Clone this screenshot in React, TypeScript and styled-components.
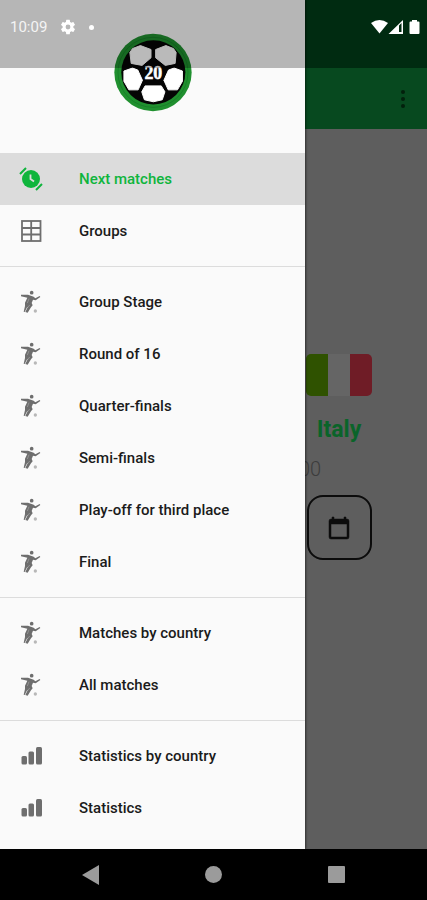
import React from "react";
import styled, { createGlobalStyle } from "styled-components";

const GlobalStyle = createGlobalStyle`
  *, *::before, *::after { box-sizing: border-box; }
  body { margin: 0; background: #000; font-family: Roboto, "Noto Sans", sans-serif; }
  button { font: inherit; border: 0; padding: 0; background: none; cursor: pointer; }
  svg { display: block; flex: none; }
`;

const Device = styled.div`
  min-height: 100vh;
  display: flex;
  flex-direction: column;
`;

const Stage = styled.div`
  flex: 1;
  display: grid;
  grid-template: 1fr / minmax(0, 1fr);
  & > * { grid-area: 1 / 1; }
`;

const Page = styled.main`
  display: flex;
  flex-direction: column;
  background: #5e5e5e;
`;

const PageTop = styled.div`
  height: 68px;
  background: #002b11;
`;

const AppBar = styled.header`
  height: 61px;
  padding-right: 12px;
  display: flex;
  align-items: center;
  justify-content: flex-end;
  background: #07491f;
`;

const IconButton = styled.button`
  display: grid;
  place-items: center;
  width: 24px;
  height: 32px;
  color: #02200c;
`;

const Team = styled.section`
  align-self: flex-end;
  width: 96px;
  margin: 225px 40px 0 0;
  display: flex;
  flex-direction: column;
  align-items: center;
`;

const Flag = styled.div`
  width: 66px;
  height: 42px;
  border-radius: 5px;
  overflow: hidden;
  display: grid;
  grid-template-columns: repeat(3, 1fr);
`;

const Stripe = styled.span<{ $color: string }>`
  background: ${(p) => p.$color};
`;

const TeamName = styled.h2`
  margin: 19px 0 0;
  font-size: 23px;
  line-height: 30px;
  font-weight: 700;
  color: #0a6429;
`;

const Kickoff = styled.span`
  align-self: flex-start;
  padding-left: 8px;
  margin-top: 12px;
  font-size: 20px;
  line-height: 24px;
  font-weight: 300;
  color: #3c3c3c;
`;

const CalendarButton = styled.button`
  width: 65px;
  height: 65px;
  margin-top: 14px;
  display: grid;
  place-items: center;
  border: 2px solid #0c0c0c;
  border-radius: 16px;
  color: #0c0c0c;
`;

const Drawer = styled.aside`
  width: min(calc(100% - 122px), 360px);
  background: #fafafa;
  box-shadow: 1px 0 2px rgba(0, 0, 0, 0.5);
`;

const DrawerHeader = styled.div`
  height: 153px;
  padding-top: 33px;
  display: flex;
  justify-content: center;
  align-items: flex-start;
`;

const Group = styled.ul`
  list-style: none;
  margin: 0;
  padding: 0;
  & + & {
    margin-top: 9px;
    padding-top: 9px;
    border-top: 1px solid #dcdcdc;
  }
`;

const Item = styled.button<{ $active?: boolean }>`
  width: 100%;
  height: 52px;
  padding-left: 19px;
  display: flex;
  align-items: center;
  gap: 36px;
  text-align: left;
  font-size: 15px;
  line-height: 21px;
  font-weight: 500;
  color: ${(p) => (p.$active ? "#0fb53c" : "#1b1b1b")};
  background: ${(p) => (p.$active ? "#dcdcdc" : "transparent")};
  svg { color: ${(p) => (p.$active ? "#0fb53c" : "#6e6e6e")}; }
`;

const StatusBar = styled.div`
  align-self: start;
  position: relative;
  height: 68px;
  padding: 0 7px 14px 10px;
  display: flex;
  align-items: center;
  justify-content: space-between;
  color: #fff;
`;

const StatusShade = styled.div`
  align-self: start;
  position: relative;
  width: min(calc(100% - 122px), 360px);
  height: 68px;
  background: rgba(0, 0, 0, 0.27);
`;

const StatusGroup = styled.div<{ $gap: number }>`
  display: flex;
  align-items: center;
  gap: ${(p) => p.$gap}px;
`;

const Clock = styled.span`
  font-size: 15px;
  line-height: 20px;
  color: #f4f4f4;
`;

const Dot = styled.span`
  width: 5px;
  height: 5px;
  border-radius: 50%;
  background: #fff;
`;

const NavBar = styled.nav`
  height: 51px;
  display: flex;
  justify-content: center;
  align-items: center;
  gap: 99px;
  color: #9b9b9b;
`;

const NavButton = styled.button`
  width: 24px;
  height: 24px;
  display: grid;
  place-items: center;
  color: inherit;
`;

const BallLogo = () => (
  <svg width="78" height="79" viewBox="341 98 236 237" role="img" aria-label="Football 20">
    <circle cx="459" cy="216.500" r="117" fill="#20902f" />
    <circle cx="459" cy="216" r="106" fill="none" stroke="#178028" strokeWidth="3" />
    <circle cx="460" cy="216" r="97" fill="#050505" />
    <g fill="#fff" stroke="#fff" strokeWidth="3" strokeLinejoin="round">
      <path d="M389 156 397 144 421 135 453 147V172L426 195 393 189Z" />
      <path d="M529 156 521 144 498 135 467 147V172L496 195 526 189Z" />
      <path d="M371 212 397 203 413 209 427 240 414 269 386 269 371 243Z" />
      <path d="M548 212 523 203 506 209 492 240 505 269 533 269 548 243Z" />
      <path d="M435 257H484L495 275 487 299 460 305 433 299 425 275Z" />
    </g>
    <text
      x="460"
      y="235"
      textAnchor="middle"
      fontFamily="Liberation Serif, serif"
      fontWeight="700"
      fontSize="54"
      fill="#fff"
      stroke="#fff"
      strokeWidth="1.500"
    >
      20
    </text>
  </svg>
);

const AlarmIcon = () => (
  <svg width="24" height="24" viewBox="0 0 24 24" fill="none" stroke="currentColor">
    <circle cx="12" cy="12" r="9" fill="currentColor" stroke="none" />
    <path d="M1 7 7 1M17 23 23 17" strokeWidth="2" />
    <path d="M11.500 7.500V12L15 14.500" stroke="#dcdcdc" strokeWidth="1.800" />
  </svg>
);

const TableIcon = () => (
  <svg width="24" height="24" viewBox="0 0 24 24" fill="none" stroke="currentColor">
    <rect x="3" y="2" width="18.500" height="20" strokeWidth="1.800" />
    <path d="M12.200 2V22M3 9H21.500M3 15.500H21.500" strokeWidth="1.800" />
  </svg>
);

const PlayerIcon = () => (
  <svg width="24" height="24" viewBox="59 28 72 72" fill="none" stroke="currentColor">
    <circle cx="97" cy="36" r="5.500" fill="currentColor" stroke="none" />
    <path
      d="M65 42 86 42 103 48 108 53 121 46 123 49 109 59 101 57 97 67 100 74 95 80 85 96 78 94 85 80 84 78 76 94 73 93 77 76 77 66 84 51 65 47Z"
      fill="currentColor"
      stroke="none"
    />
    <path d="M89 54 84 67M86 80 91 73" stroke="#a5a5a5" strokeWidth="2" />
    <circle cx="108" cy="91" r="5" fill="#b8b8b8" stroke="none" />
  </svg>
);

const BarsIcon = () => (
  <svg width="24" height="24" viewBox="0 0 24 24" fill="currentColor">
    <rect x="2.500" y="12" width="5.500" height="8.500" rx="1.500" />
    <rect x="9.500" y="7.500" width="5.500" height="13" rx="1.500" />
    <rect x="17" y="3" width="6" height="17.500" rx="1.500" />
  </svg>
);

const GearIcon = () => (
  <svg width="18" height="18" viewBox="0 0 24 24" fill="currentColor">
    <path d="M19.140 12.940c.04-.3.06-.61.06-.94s-.02-.64-.07-.94l2.030-1.580a.49.49 0 0 0 .12-.61l-1.920-3.320a.49.49 0 0 0-.59-.22l-2.390.96a7 7 0 0 0-1.620-.94l-.36-2.540A.48.48 0 0 0 13.920 2.400h-3.840a.48.48 0 0 0-.48.410l-.36 2.540c-.59.24-1.130.57-1.620.94l-2.390-.96a.49.49 0 0 0-.59.22L2.720 8.870a.49.49 0 0 0 .12.61l2.030 1.580c-.05.3-.07.62-.07.94s.02.64.07.94l-2.030 1.580a.49.49 0 0 0-.12.61l1.920 3.320c.12.22.37.29.59.22l2.390-.96c.5.38 1.030.7 1.620.94l.36 2.540c.05.24.25.41.48.41h3.840c.24 0 .44-.17.48-.41l.36-2.540a7 7 0 0 0 1.620-.94l2.390.96c.22.08.47 0 .59-.22l1.920-3.320a.49.49 0 0 0-.12-.61zM12 15.200a3.200 3.200 0 1 1 0-6.400 3.200 3.200 0 0 1 0 6.400z" />
  </svg>
);

const CalendarIcon = () => (
  <svg width="24" height="24" viewBox="0 0 24 24" fill="currentColor" stroke="currentColor" strokeWidth="0.500">
    <path d="M20 3h-1V1h-2v2H7V1H5v2H4a2 2 0 0 0-2 2v16a2 2 0 0 0 2 2h16a2 2 0 0 0 2-2V5a2 2 0 0 0-2-2zm0 18H4V8h16z" />
  </svg>
);

const SignalIcons = () => (
  <svg width="49" height="16" viewBox="0 0 49 16" fill="#fff">
    <path d="M0 4Q8.500-2 17 4L8.500 14.500Z" />
    <path fillRule="evenodd" d="M17.500 15 32 1V15ZM28 6.500V13H30.500V4Z" />
    <path d="M41 1H46V2.500H47.500A1 1 0 0 1 48.500 3.500V14A1 1 0 0 1 47.500 15H39.500A1 1 0 0 1 38.500 14V3.500A1 1 0 0 1 39.500 2.500H41Z" />
  </svg>
);

const groups = [
  [
    { label: "Next matches", Icon: AlarmIcon, active: true },
    { label: "Groups", Icon: TableIcon },
  ],
  [
    { label: "Group Stage", Icon: PlayerIcon },
    { label: "Round of 16", Icon: PlayerIcon },
    { label: "Quarter-finals", Icon: PlayerIcon },
    { label: "Semi-finals", Icon: PlayerIcon },
    { label: "Play-off for third place", Icon: PlayerIcon },
    { label: "Final", Icon: PlayerIcon },
  ],
  [
    { label: "Matches by country", Icon: PlayerIcon },
    { label: "All matches", Icon: PlayerIcon },
  ],
  [
    { label: "Statistics by country", Icon: BarsIcon },
    { label: "Statistics", Icon: BarsIcon },
  ],
] as { label: string; Icon: React.FC; active?: boolean }[][];

export default function App() {
  return (
    <Device>
      <GlobalStyle />
      <Stage>
        <Page>
          <PageTop />
          <AppBar>
            <IconButton aria-label="More options">
              <svg width="4" height="18" viewBox="0 0 4 18" fill="currentColor">
                <circle cx="2" cy="2" r="2" />
                <circle cx="2" cy="9" r="2" />
                <circle cx="2" cy="16" r="2" />
              </svg>
            </IconButton>
          </AppBar>
          <Team>
            <Flag role="img" aria-label="Flag of Italy">
              <Stripe $color="#2f5200" />
              <Stripe $color="#656565" />
              <Stripe $color="#6f1c26" />
            </Flag>
            <TeamName>Italy</TeamName>
            <Kickoff>00</Kickoff>
            <CalendarButton aria-label="Add to calendar">
              <CalendarIcon />
            </CalendarButton>
          </Team>
        </Page>

        <Drawer>
          <DrawerHeader>
            <BallLogo />
          </DrawerHeader>
          <nav aria-label="Main menu">
            {groups.map((items) => (
              <Group key={items[0].label}>
                {items.map(({ label, Icon, active }) => (
                  <li key={label}>
                    <Item $active={active} aria-current={active ? "page" : undefined}>
                      <Icon />
                      {label}
                    </Item>
                  </li>
                ))}
              </Group>
            ))}
          </nav>
        </Drawer>

        <StatusShade />
        <StatusBar>
          <StatusGroup $gap={12}>
            <Clock>10:09</Clock>
            <GearIcon />
            <Dot />
          </StatusGroup>
          <SignalIcons />
        </StatusBar>
      </Stage>

      <NavBar aria-label="System navigation">
        <NavButton aria-label="Back">
          <svg width="17" height="20" viewBox="0 0 17 20" fill="currentColor">
            <path d="M0 10 17 0V20Z" />
          </svg>
        </NavButton>
        <NavButton aria-label="Home">
          <svg width="17" height="17" viewBox="0 0 17 17" fill="currentColor">
            <circle cx="8.500" cy="8.500" r="8.500" />
          </svg>
        </NavButton>
        <NavButton aria-label="Recent apps">
          <svg width="17" height="17" viewBox="0 0 17 17" fill="currentColor">
            <rect width="17" height="17" rx="1" />
          </svg>
        </NavButton>
      </NavBar>
    </Device>
  );
}
